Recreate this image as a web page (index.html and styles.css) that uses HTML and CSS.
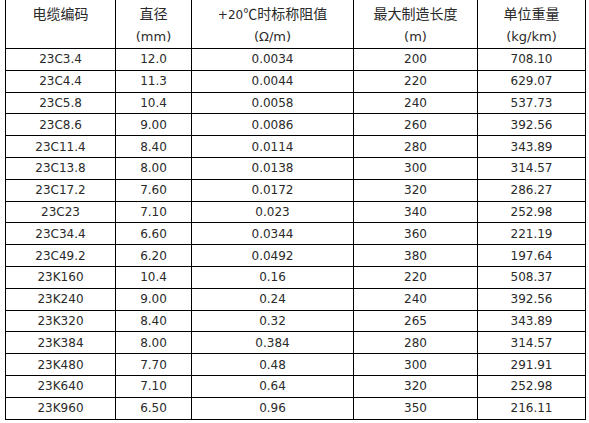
FILE: index.html
```html
<!DOCTYPE html>
<html>
<head>
<meta charset="utf-8">
<link rel="stylesheet" href="styles.css">
</head>
<body>
<table class="spec">
<colgroup>
<col class="c1"><col class="c2"><col class="c3"><col class="c4"><col class="c5">
</colgroup>
<thead>
<tr>
<th><span class="zh">电缆编码</span><br>&nbsp;</th>
<th><span class="zh">直径</span><br><span class="unit">(mm)</span></th>
<th>+20<span class="zh">℃时标称阻值</span><br><span class="unit">(Ω/m)</span></th>
<th><span class="zh">最大制造长度</span><br><span class="unit">(m)</span></th>
<th><span class="zh">单位重量</span><br><span class="unit">(kg/km)</span></th>
</tr>
</thead>
<tbody>
<tr><td>23C3.4</td><td>12.0</td><td>0.0034</td><td>200</td><td>708.10</td></tr>
<tr><td>23C4.4</td><td>11.3</td><td>0.0044</td><td>220</td><td>629.07</td></tr>
<tr><td>23C5.8</td><td>10.4</td><td>0.0058</td><td>240</td><td>537.73</td></tr>
<tr><td>23C8.6</td><td>9.00</td><td>0.0086</td><td>260</td><td>392.56</td></tr>
<tr><td>23C11.4</td><td>8.40</td><td>0.0114</td><td>280</td><td>343.89</td></tr>
<tr><td>23C13.8</td><td>8.00</td><td>0.0138</td><td>300</td><td>314.57</td></tr>
<tr><td>23C17.2</td><td>7.60</td><td>0.0172</td><td>320</td><td>286.27</td></tr>
<tr><td>23C23</td><td>7.10</td><td>0.023</td><td>340</td><td>252.98</td></tr>
<tr><td>23C34.4</td><td>6.60</td><td>0.0344</td><td>360</td><td>221.19</td></tr>
<tr><td>23C49.2</td><td>6.20</td><td>0.0492</td><td>380</td><td>197.64</td></tr>
<tr><td>23K160</td><td>10.4</td><td>0.16</td><td>220</td><td>508.37</td></tr>
<tr><td>23K240</td><td>9.00</td><td>0.24</td><td>240</td><td>392.56</td></tr>
<tr><td>23K320</td><td>8.40</td><td>0.32</td><td>265</td><td>343.89</td></tr>
<tr><td>23K384</td><td>8.00</td><td>0.384</td><td>280</td><td>314.57</td></tr>
<tr><td>23K480</td><td>7.70</td><td>0.48</td><td>300</td><td>291.91</td></tr>
<tr><td>23K640</td><td>7.10</td><td>0.64</td><td>320</td><td>252.98</td></tr>
<tr><td>23K960</td><td>6.50</td><td>0.96</td><td>350</td><td>216.11</td></tr>
</tbody>
</table>
</body>
</html>
```
FILE: styles.css
```css
html, body {
  margin: 0;
  padding: 0;
  background: #ffffff;
}
body {
  padding-left: 5px;
}
.spec {
  border-collapse: collapse;
  table-layout: fixed;
  width: 580px;
  font-family: "DejaVu Sans", "Noto Sans CJK SC", sans-serif;
  font-size: 12px;
  color: #2a2a2a;
}
.c1 { width: 110px; }
.c2 { width: 76px; }
.c3 { width: 162px; }
.c4 { width: 124px; }
.c5 { width: 108px; }
.spec th, .spec td {
  border: 1px solid #000000;
  text-align: center;
  padding: 0;
  font-weight: normal;
}
.spec th {
  border-top: none;
  height: 46px;
  line-height: 22px;
  vertical-align: top;
  padding-top: 2px;
  box-sizing: border-box;
}
.spec td {
  height: 20.8px;
  line-height: 20px;
}
.zh {
  font-family: "Noto Sans CJK SC", sans-serif;
  font-size: 14px;
}
.unit {
  font-size: 13px;
}
```
